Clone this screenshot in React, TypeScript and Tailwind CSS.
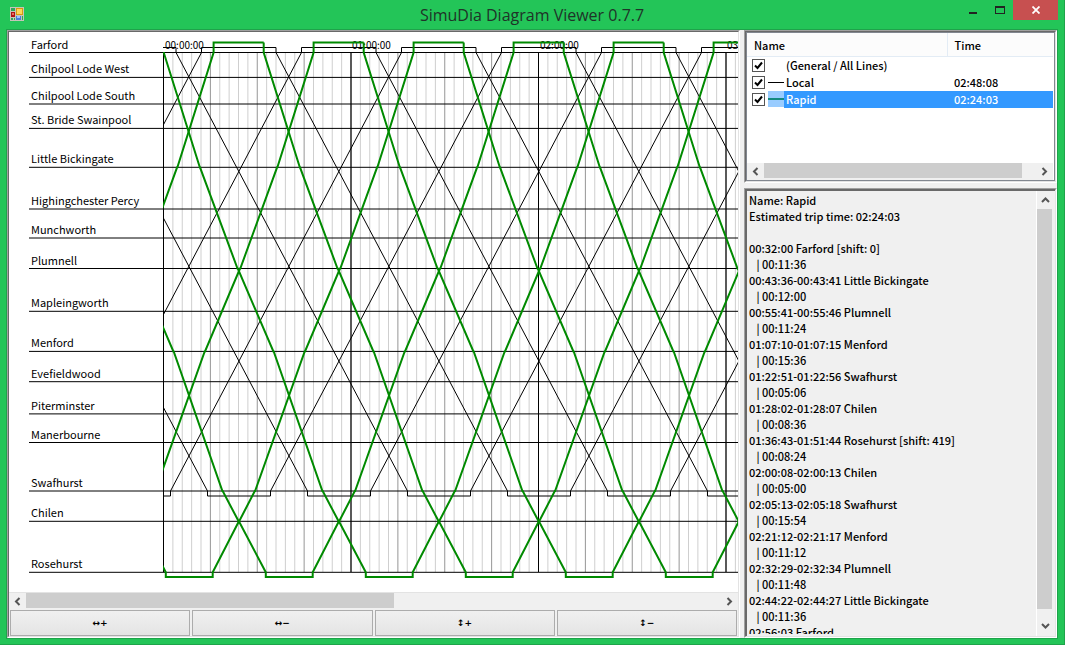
import { useState } from "react";

type Point = [number, number];
type Dir = "left" | "right" | "up" | "down";

const ORIGIN = 163.5;
const HOUR = 187.5;
const PERIOD = 100;
const END = ORIGIN + HOUR * 6;

const STATIONS: { name: string; y: number }[] = [
  { name: "Farford", y: 52.5 },
  { name: "Chilpool Lode West", y: 77.4 },
  { name: "Chilpool Lode South", y: 104 },
  { name: "St. Bride Swainpool", y: 128.4 },
  { name: "Little Bickingate", y: 167.3 },
  { name: "Highingchester Percy", y: 209 },
  { name: "Munchworth", y: 238 },
  { name: "Plumnell", y: 268.5 },
  { name: "Mapleingworth", y: 311.3 },
  { name: "Menford", y: 351.4 },
  { name: "Evefieldwood", y: 381.7 },
  { name: "Piterminster", y: 413.9 },
  { name: "Manerbourne", y: 442.5 },
  { name: "Swafhurst", y: 491 },
  { name: "Chilen", y: 521.3 },
  { name: "Rosehurst", y: 572.3 },
];

const LOCAL: Point[] = [
  [176, 47.5], [176, 52.5], [407.5, 491], [407.5, 496], [470.5, 496],
  [470.5, 491], [701.5, 52.5], [701.5, 47.5], [776, 47.5],
];

const RAPID: Point[] = [
  [263.7, 42.5], [263.7, 52.5], [299.8, 167.3], [300, 167.3], [337.5, 268.5],
  [337.8, 268.5], [373.4, 351.5], [373.7, 351.5], [422.4, 491], [422.7, 491],
  [438.6, 521.3], [438.9, 521.3], [465.8, 572.3], [465.8, 577], [512.7, 577],
  [512.7, 572.3], [538.9, 521.3], [539.2, 521.3], [554.8, 491], [555.1, 491],
  [604.7, 351.5], [605, 351.5], [640, 268.5], [640.3, 268.5], [677.1, 167.3],
  [677.4, 167.3], [713.6, 52.5], [713.6, 42.5], [763.7, 42.5],
];

const TRIP = `Name: Rapid
Estimated trip time: 02:24:03

00:32:00 Farford [shift: 0]
   | 00:11:36
00:43:36-00:43:41 Little Bickingate
   | 00:12:00
00:55:41-00:55:46 Plumnell
   | 00:11:24
01:07:10-01:07:15 Menford
   | 00:15:36
01:22:51-01:22:56 Swafhurst
   | 00:05:06
01:28:02-01:28:07 Chilen
   | 00:08:36
01:36:43-01:51:44 Rosehurst [shift: 419]
   | 00:08:24
02:00:08-02:00:13 Chilen
   | 00:05:00
02:05:13-02:05:18 Swafhurst
   | 00:15:54
02:21:12-02:21:17 Menford
   | 00:11:12
02:32:29-02:32:34 Plumnell
   | 00:11:48
02:44:22-02:44:27 Little Bickingate
   | 00:11:36
02:56:03 Farford`;

const LINES = [
  { name: "(General / All Lines)", time: "", color: "" },
  { name: "Local", time: "02:48:08", color: "#000000" },
  { name: "Rapid", time: "02:24:03", color: "#008a00" },
];

const path = (points: Point[], shift: number) =>
  points.map(([x, y]) => `${(x + shift).toFixed(1)},${y}`).join(" ");

function Diagram() {
  const ticks = Array.from({ length: 121 }, (_, i) => i).filter((i) => i % 20 !== 0);
  const hours = [0, 1, 2, 3, 4, 5, 6];
  const runs = Array.from({ length: 18 }, (_, i) => (i - 6) * PERIOD);
  return (
    <svg viewBox="9 32 1358 561" className="block h-[561px] w-[1358px] max-w-none" role="img" aria-label="Train diagram">
      <defs>
        <clipPath id="plot">
          <path d={`M163 47H166V32H${END}V593H163Z`} />
        </clipPath>
        <clipPath id="rapid-plot">
          <path d={`M163 52H166V32H${END}V593H163Z`} />
        </clipPath>
      </defs>
      {ticks.map((i) => (
        <line key={i} x1={ORIGIN + i * 9.375} x2={ORIGIN + i * 9.375} y1="52.5" y2="572" stroke={i % 5 === 0 ? "#969696" : "#cfcfcf"} />
      ))}
      {hours.map((h) => (
        <line key={h} x1={ORIGIN + h * HOUR} x2={ORIGIN + h * HOUR} y1="52.5" y2="572" stroke="#000" strokeWidth={h % 2 ? 1.3 : 1} />
      ))}
      {STATIONS.map((s) => (
        <g key={s.name}>
          <line x1="29" x2={END} y1={s.y} y2={s.y} stroke="#000" />
          <text x="31" y={Math.round(s.y) - 4} className="font-['Noto_Sans_CJK_JP',sans-serif] text-[11px]">{s.name}</text>
        </g>
      ))}
      {hours.map((h) => (
        <text key={h} x={Math.round(ORIGIN + h * HOUR) + 1} y="49" className="font-['Noto_Sans_CJK_JP',sans-serif] text-[10px]">
          {`0${h}:00:00`}
        </text>
      ))}
      <g clipPath="url(#plot)" fill="none">
        {runs.map((r) => (
          <polyline key={r} points={path(LOCAL, r)} stroke="#000" />
        ))}
      </g>
      <g clipPath="url(#rapid-plot)" fill="none">
        {runs.map((r) => (
          <polyline key={r} points={path(RAPID, r)} stroke="#008a00" strokeWidth="2" />
        ))}
      </g>
    </svg>
  );
}

const CHEVRONS: Record<Dir, string> = {
  left: "M6.5 1 3 4.5 6.5 8",
  right: "M2.5 1 6 4.5 2.5 8",
  up: "M1 6 4.5 2.5 8 6",
  down: "M1 3 4.5 6.5 8 3",
};

function Arrow({ dir }: { dir: Dir }) {
  return (
    <button type="button" aria-label={`Scroll ${dir}`} className="flex h-[17px] w-[17px] shrink-0 items-center justify-center bg-[#f0f0f0]">
      <svg viewBox="0 0 9 9" className="size-[9px]" fill="none" stroke="#555" strokeWidth="2">
        <path d={CHEVRONS[dir]} />
      </svg>
    </button>
  );
}

function Sunken({ className, children }: { className: string; children: React.ReactNode }) {
  return (
    <div className={`flex min-h-0 flex-col border border-t-[#a0a0a0] border-r-white border-b-white border-l-[#a0a0a0] ${className}`}>
      <div className="flex min-h-0 flex-1 flex-col border border-t-[#696969] border-r-[#e3e3e3] border-b-[#e3e3e3] border-l-[#696969]">
        {children}
      </div>
    </div>
  );
}

function TitleBar() {
  return (
    <header className="grid h-[29px] shrink-0 grid-cols-[1fr_auto_1fr]">
      <svg viewBox="0 0 14 14" className="mt-[7px] ml-[10px] size-[14px]">
        <path d="M0 0h14v14H0z" fill="#c5c5b8" />
        <path d="M1 1h4v3H1zM1 11h2v2H1zM4 11h1v2H4zM12 9h1v4h-1z" fill="#2fa65a" />
        <rect x="1" y="5" width="4" height="5" fill="#b01515" />
        <rect x="2" y="6" width="2" height="2" fill="#e87060" />
        <rect x="6" y="1" width="7" height="7" fill="#d99a10" />
        <rect x="7" y="2" width="5" height="5" fill="#ffd65a" />
        <rect x="6" y="9" width="5" height="4" fill="#4a7fd8" />
        <rect x="7" y="9" width="3" height="2" fill="#9cc4ff" />
      </svg>
      <h1 className="pt-[3px] font-['Open_Sans',sans-serif] text-[16px] leading-6 text-[#1f3328]">SimuDia Diagram Viewer 0.7.7</h1>
      <div className="mr-[6px] flex h-5 justify-end">
        <button type="button" aria-label="Minimize" className="flex w-[27px] items-end justify-center pb-[6px]">
          <span className="h-[2px] w-2 bg-[#222]" />
        </button>
        <button type="button" aria-label="Maximize" className="flex w-[27px] items-end justify-center pb-[6px]">
          <span className="h-2 w-[10px] border border-t-2 border-[#222]" />
        </button>
        <button type="button" aria-label="Close" className="flex w-[45px] items-center justify-center bg-[#c75050]">
          <svg viewBox="0 0 8 8" className="size-2" stroke="#fff" strokeWidth="1.8">
            <path d="M.5 .5l7 7M7.5 .5l-7 7" />
          </svg>
        </button>
      </div>
    </header>
  );
}

function LineList() {
  const [checked, setChecked] = useState([true, true, true]);
  const [selected, setSelected] = useState(2);
  return (
    <Sunken className="h-[153px] shrink-0 bg-white">
      <div className="flex min-h-0 flex-1 flex-col border border-[#828790] pr-px">
        <div className="min-h-0 flex-1 overflow-hidden">
          <table className="w-full table-fixed border-collapse text-left">
            <thead className="bg-[#fcfcfc]">
              <tr className="h-[23px]">
                <th className="w-[200px] border-r border-b border-[#e3ecf5] p-0 pt-[2px] pl-[7px] leading-5 font-medium">Name</th>
                <th className="border-b border-[#e3ecf5] p-0 pt-[2px] pl-[7px] leading-5 font-medium">Time</th>
              </tr>
            </thead>
            <tbody>
              {LINES.map((line, i) => {
                const on = selected === i;
                return (
                  <tr key={line.name} className="h-[17px]" onClick={() => setSelected(i)}>
                    <td className="p-0">
                      <label className="flex h-[17px] items-center pl-[5px]">
                        <span className="grid">
                          <input
                            type="checkbox"
                            checked={checked[i]}
                            onChange={() => setChecked(checked.map((c, j) => (j === i ? !c : c)))}
                            className="col-start-1 row-start-1 size-[13px] appearance-none border border-[#555] bg-white"
                          />
                          {checked[i] && (
                            <svg viewBox="0 0 13 13" className="pointer-events-none col-start-1 row-start-1 size-[13px]" fill="none" stroke="#000" strokeWidth="2">
                              <path d="M3 6.5 5.5 9 10 3.5" />
                            </svg>
                          )}
                        </span>
                        <span className={`ml-[3px] flex h-4 w-4 items-center ${on ? "bg-[#99ccff]" : ""}`}>
                          {line.color && (
                            <span className={`w-full ${on ? "h-[2px]" : "h-px"}`} style={{ backgroundColor: on ? "#148a80" : line.color }} />
                          )}
                        </span>
                        <span className={`h-[17px] flex-1 pl-[2px] leading-4 ${on ? "bg-[#3399ff] text-white" : ""}`}>{line.name}</span>
                      </label>
                    </td>
                    <td className={`h-[17px] p-0 pl-[7px] align-top leading-4 ${on ? "bg-[#3399ff] text-white" : ""}`}>{line.time}</td>
                  </tr>
                );
              })}
            </tbody>
          </table>
        </div>
        <div className="flex h-[17px] shrink-0 bg-[#f0f0f0]">
          <Arrow dir="left" />
          <div className="flex flex-1">
            <div className="h-[15px] w-[95%] bg-[#cdcdcd]" />
          </div>
          <Arrow dir="right" />
        </div>
      </div>
    </Sunken>
  );
}

function TripDetails() {
  return (
    <Sunken className="flex-1 bg-[#f0f0f0]">
      <div className="flex min-h-0 flex-1 border-t border-l border-[#696969]">
        <textarea
          readOnly
          aria-label="Trip details"
          value={TRIP}
          className="mb-[2px] min-w-0 flex-1 resize-none overflow-hidden bg-[#f0f0f0] pt-px pl-[2px] leading-4 outline-none"
        />
        <div className="flex w-[19px] flex-col border-l border-white bg-[#f0f0f0] pt-px pb-[2px]">
          <Arrow dir="up" />
          <div className="flex-1">
            <div className="h-[98%] w-[15px] bg-[#cdcdcd]" />
          </div>
          <Arrow dir="down" />
        </div>
      </div>
    </Sunken>
  );
}

export default function App() {
  return (
    <div className="flex h-screen flex-col overflow-hidden border-r border-b border-[#1ea34a] bg-[#23c558] font-['Noto_Sans_CJK_JP',sans-serif] text-[11px] text-black">
      <TitleBar />
      <main className="mr-[6px] mb-[5px] ml-[6px] flex min-h-0 flex-1 border border-[#1ea34a] bg-[#f0f0f0]">
        <Sunken className="min-w-0 flex-1">
          <div className="min-h-0 flex-1 overflow-hidden border-b border-[#e3e3e3] bg-white">
            <Diagram />
          </div>
          <div className="flex h-[17px] shrink-0">
            <Arrow dir="left" />
            <div className="flex flex-1">
              <div className="h-[15px] w-[53%] bg-[#cdcdcd]" />
            </div>
            <Arrow dir="right" />
          </div>
          <div className="grid h-[26px] shrink-0 grid-cols-4 gap-[2px] px-px">
            {["↔+", "↔−", "↕+", "↕−"].map((label) => (
              <button
                key={label}
                type="button"
                className="border border-[#acacac] bg-linear-to-b from-[#f0f0f0] to-[#e4e4e4] font-['DejaVu_Sans',sans-serif] text-[9px] leading-4 font-bold"
              >
                {label}
              </button>
            ))}
          </div>
        </Sunken>
        <div className="ml-1 flex w-[313px] shrink-0 flex-col gap-[5px] font-medium">
          <LineList />
          <TripDetails />
        </div>
      </main>
    </div>
  );
}
